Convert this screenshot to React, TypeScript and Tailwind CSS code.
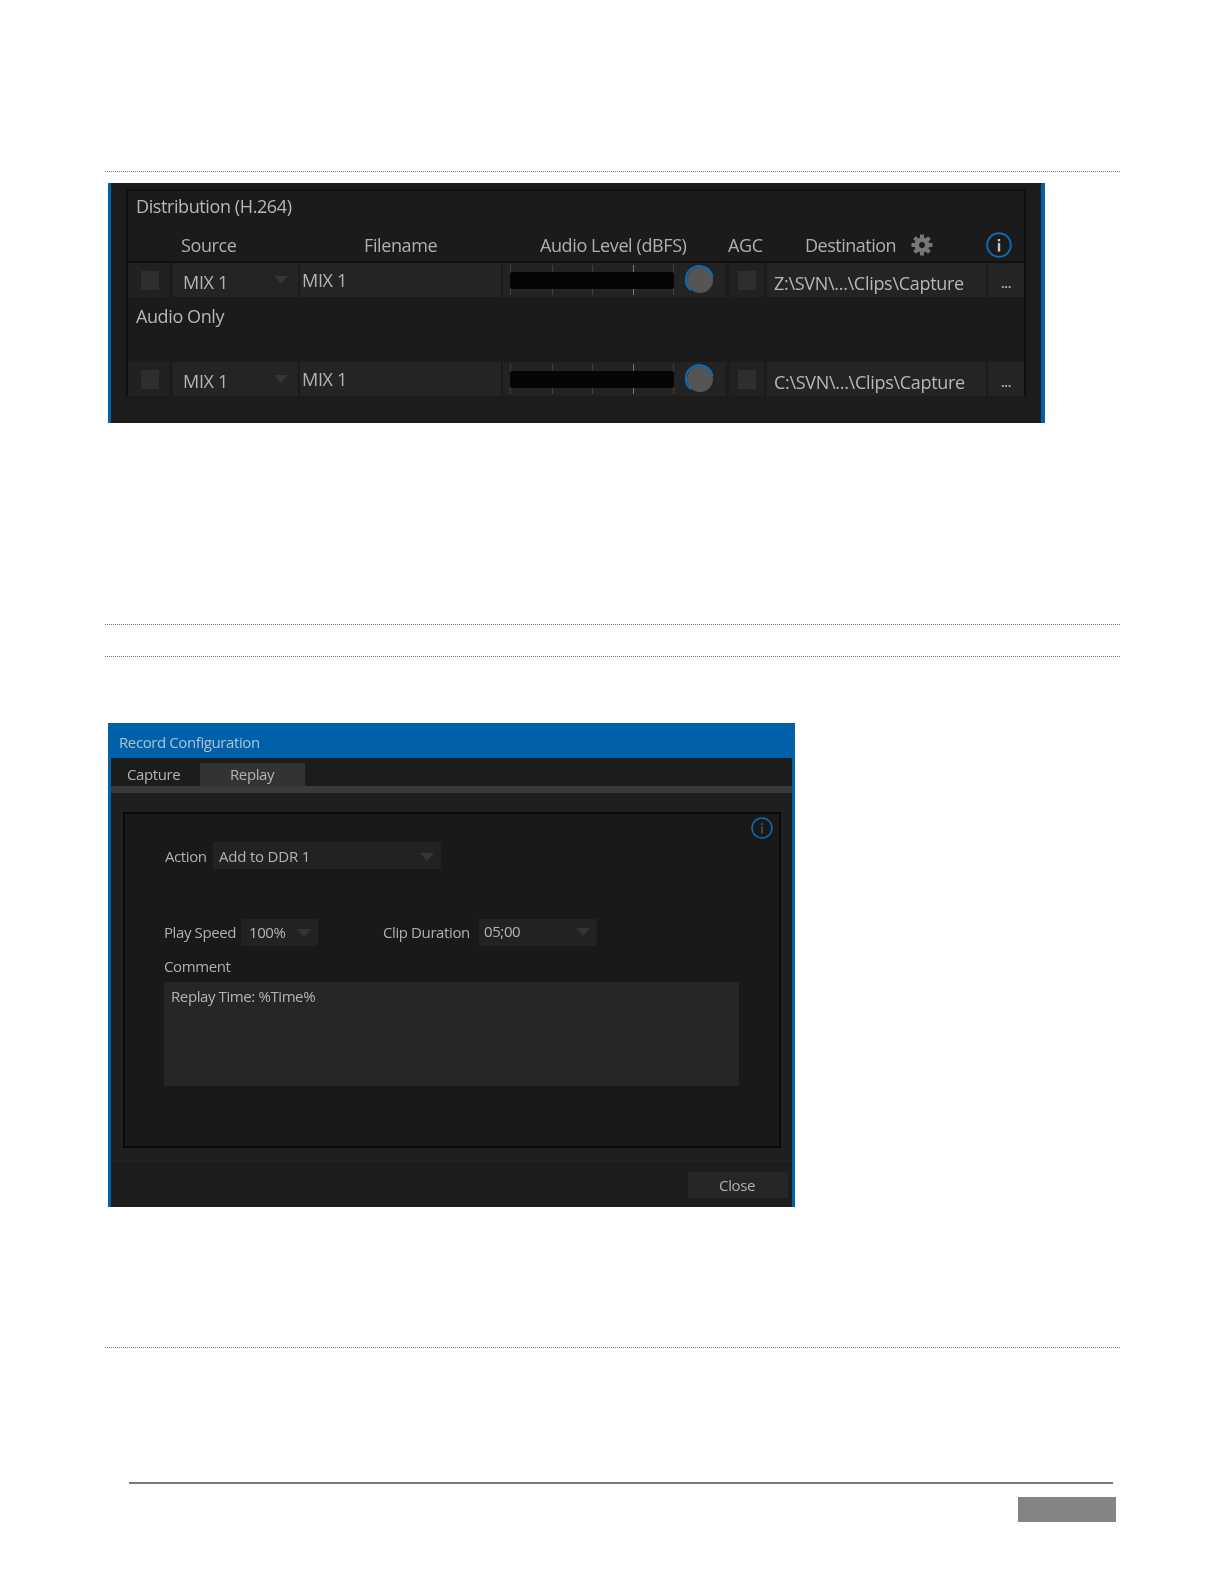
function Arrow({ className = "" }: { className?: string }) {
  return (
    <svg width="14" height="8" viewBox="0 0 14 8" className={className}>
      <polygon points="0,0 14,0 7,8" fill="#353535" />
    </svg>
  );
}

function InfoIcon({ size, thin = false }: { size: number; thin?: boolean }) {
  return (
    <svg width={size} height={size} viewBox="0 0 26 26">
      <circle cx="13" cy="13" r="11.8" fill="none" stroke="#0e6cb4" strokeWidth={thin ? 1.8 : 2} />
      <rect x={thin ? 12.4 : 11.8} y="11" width={thin ? 1.2 : 2.4} height="8.5" fill={thin ? "#777" : "#c4c4c4"} />
      <rect x={thin ? 12.4 : 11.8} y="7" width={thin ? 1.2 : 2.4} height="2.4" fill={thin ? "#777" : "#c4c4c4"} />
    </svg>
  );
}

function Gear() {
  return (
    <svg width="22" height="22" viewBox="0 0 22 22">
      <circle cx="11" cy="11" r="5.2" fill="none" stroke="#777" strokeWidth="4.6" />
      {[0, 45, 90, 135, 180, 225, 270, 315].map((deg) => (
        <rect key={deg} x="9" y="0.5" width="4" height="4.5" fill="#777" transform={`rotate(${deg} 11 11)`} />
      ))}
    </svg>
  );
}

function Meter() {
  return (
    <svg width="164" height="34" viewBox="0 0 164 34" className="shrink-0">
      {[0, 42, 82, 123, 163].map((x, i) => (
        <rect key={x} x={x} y="2" width="1" height="30" fill={i === 3 ? "#777" : "#404040"} />
      ))}
      <rect x="0" y="9" width="164" height="17" rx="2" fill="#050505" />
    </svg>
  );
}

function Knob() {
  return (
    <svg width="30" height="30" viewBox="0 0 30 30" className="shrink-0">
      <circle cx="15" cy="15" r="13" fill="#555" />
      <path d="M27.6 12 A13.5 13.5 0 1 0 6 25.2" fill="none" stroke="#0e6cb4" strokeWidth="2" />
    </svg>
  );
}

function Check() {
  return <div className="ml-[2px] h-[19px] w-[18px] bg-[#2e2e2e]" />;
}

function StreamRow({ path }: { path: string }) {
  return (
    <div className="flex h-[34px] text-[18px] leading-none tracking-[-0.3px] text-[#b4b4b4]">
      <div className="flex w-[41px] items-center justify-center bg-[#212121]">
        <Check />
      </div>
      <div className="ml-[4px] flex w-[125px] items-center bg-[#242424] pl-[10px] pr-[10px] pt-[3px]">
        <span className="flex-1">MIX 1</span>
        <Arrow className="-mt-[3px]" />
      </div>
      <div className="ml-[2px] flex w-[201px] items-center bg-[#242424] pb-[1px] pl-[2px]">MIX 1</div>
      <div className="ml-[2px] flex w-[223px] items-center gap-[11px] bg-[#232323] pl-[7px]">
        <Meter />
        <Knob />
      </div>
      <div className="ml-[3px] flex w-[35px] items-center justify-center bg-[#212121]">
        <div className="-ml-[2px]">
          <Check />
        </div>
      </div>
      <div className="ml-[3px] flex w-[219px] items-center whitespace-nowrap bg-[#242424] pl-[7px] pt-[5px] text-[#b8b8b8]">
        {path}
      </div>
      <div className="ml-[2px] flex w-[36px] items-center justify-center bg-[#242424] pt-[6px]">
        <span className="text-[13px] font-bold text-[#aaa]">...</span>
      </div>
    </div>
  );
}

function DistributionPanel() {
  return (
    <div className="ml-[108px] mt-[11px] h-[240px] w-[937px] border-l-[3px] border-r-[4px] border-l-[#0060a8] border-r-[#0060a8] bg-[#1c1c1c] pt-[6px] blur-[0.35px]">
      <div className="ml-[15px] h-[208px] w-[900px] border-x-2 border-t-2 border-[#101010] bg-[#1b1b1b] font-['Open_Sans',sans-serif]">
        <div className="pl-[8px] pt-[2px] text-[18px] leading-[26px] tracking-[-0.4px] text-[#b8b8b8]">
          Distribution (H.264)
        </div>
        <div className="mt-[12px] flex h-[32px] items-center border-b-2 border-[#101010] pb-[2px] text-[18px] tracking-[-0.4px] text-[#b0b0b0]">
          <span className="ml-[53px] w-[183px]">Source</span>
          <span className="w-[176px]">Filename</span>
          <span className="w-[188px] whitespace-nowrap">Audio Level (dBFS)</span>
          <span className="w-[77px]">AGC</span>
          <span className="w-[106px] tracking-[-0.5px]">Destination</span>
          <Gear />
          <span className="ml-[53px]">
            <InfoIcon size={26} />
          </span>
        </div>
        <StreamRow path="Z:\SVN\...\Clips\Capture" />
        <div className="h-[65px] pl-[8px] pt-[6px] text-[18px] leading-[26px] tracking-[-0.4px] text-[#b8b8b8]">
          Audio Only
        </div>
        <StreamRow path="C:\SVN\...\Clips\Capture" />
      </div>
    </div>
  );
}

function Select({ text, width, pad }: { text: string; width: string; pad: string }) {
  return (
    <div className={`flex h-[27px] items-center bg-[#222] pr-[7px] text-[#b4b4b4] ${width} ${pad}`}>
      <span className="flex-1">{text}</span>
      <Arrow />
    </div>
  );
}

function RecordDialog() {
  return (
    <div className="ml-[108px] mt-[66px] h-[484px] w-[687px] border-x-[3px] border-b-[3px] border-[#0060a8] bg-[#1f1f1f] blur-[0.35px] font-['Open_Sans',sans-serif] text-[15px] tracking-[-0.4px]">
      <div className="-mx-[3px] flex h-[35px] items-center bg-[#0060a8] pl-[11px] pt-[4px] text-[#aec3d8]">
        Record Configuration
      </div>
      <div className="flex h-[28px] items-end bg-[#1c1c1c] text-[#b4b4b4]">
        <span className="h-[23px] w-[89px] pl-[16px] leading-[22px]">Capture</span>
        <span className="h-[23px] w-[105px] bg-[#333] pl-[30px] leading-[22px]">Replay</span>
      </div>
      <div className="h-[7px] bg-[#3a3a3a]" />
      <div className="relative ml-[12px] mt-[19px] h-[336px] w-[658px] border-2 border-[#0a0a0a] bg-[#191919] pl-[39px] pt-[28px] text-[#b0b0b0]">
        <div className="absolute right-[6px] top-[3px]">
          <InfoIcon size={22} thin />
        </div>
        <div className="flex items-center">
          <span className="ml-[1px] w-[48px] pt-[2px]">Action</span>
          <Select text="Add to DDR 1" width="w-[228px]" pad="pl-[6px] pt-[2px] tracking-[-0.2px]" />
        </div>
        <div className="mt-[50px] flex items-center">
          <span className="w-[77px] whitespace-nowrap">Play Speed</span>
          <Select text="100%" width="w-[77px]" pad="pl-[8px]" />
          <span className="ml-[65px] w-[96px] whitespace-nowrap">Clip Duration</span>
          <Select text="05;00" width="w-[118px]" pad="pb-[2px] pl-[5px]" />
        </div>
        <div className="mt-[9px] h-[21px] leading-[22px]">Comment</div>
        <div className="mt-[6px] h-[104px] w-[575px] bg-[#262626] pl-[7px] pt-[2px] leading-[24px] text-[#b4b4b4]">
          Replay Time: %Time%
        </div>
      </div>
      <div className="mt-[13px] flex h-[46px] justify-end border-t border-[#252525] bg-[#1d1d1d] pr-[4px] pt-[10px]">
        <div className="flex h-[26px] w-[100px] items-center justify-center bg-[#262626] pr-[2px] text-[#b0b0b0]">Close</div>
      </div>
    </div>
  );
}

function Rule({ className = "" }: { className?: string }) {
  return <div className={`ml-[105px] w-[1015px] border-t border-dotted border-[#777] ${className}`} />;
}

export default function App() {
  return (
    <div className="h-[1584px] w-[1224px] overflow-hidden bg-white pt-[171px]">
      <Rule />
      <DistributionPanel />
      <Rule className="mt-[201px]" />
      <Rule className="mt-[31px]" />
      <RecordDialog />
      <Rule className="mt-[140px]" />
      <div className="ml-[129px] mt-[134px] h-[2px] w-[984px] bg-[#777]" />
      <div className="ml-[1018px] mt-[13px] h-[25px] w-[98px] bg-[#848484]" />
    </div>
  );
}
